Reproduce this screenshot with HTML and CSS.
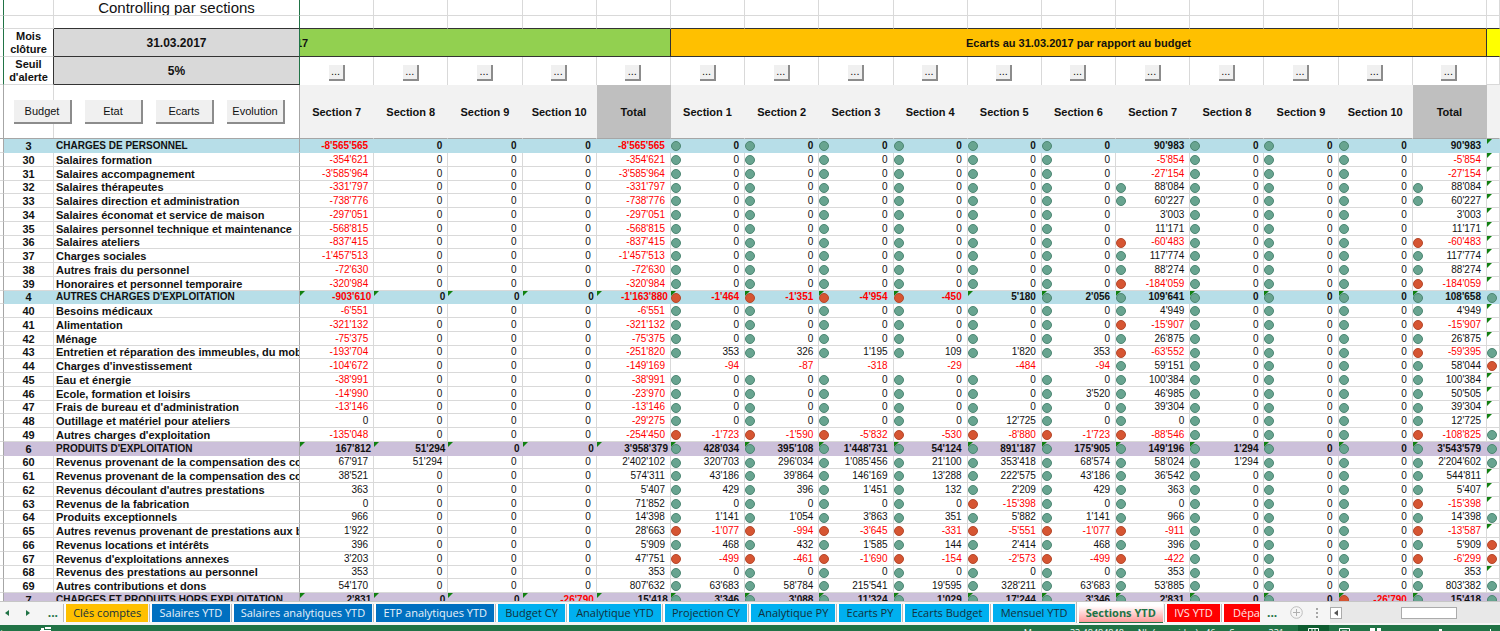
FILE: index.html
```
<!DOCTYPE html>
<html lang="fr">
<head>
  <meta charset="UTF-8" />
  <meta name="viewport" content="width=device-width, initial-scale=1.0"/>
  <title>Controlling par sections</title>
  <link rel="stylesheet" href="styles.css">
</head>
<body>
  <main class="sheet">
    <table class="grid">
      <colgroup id="cols">
        <col class="col-edge">
        <col class="col-code">
        <col class="col-label">
      </colgroup>
      <thead id="head">
        <tr class="row-title" id="rowTitle">
          <td class="edge"></td>
          <td></td>
          <th class="title frozen">Controlling par sections</th>
        </tr>
        <tr class="row-gap" id="rowGap">
          <td class="edge"></td>
          <td></td>
          <td class="frozen"></td>
        </tr>
        <tr class="row-banner">
          <td class="edge"></td>
          <th class="param-name">Mois clôture</th>
          <td class="param frozen">31.03.2017</td>
          <th class="banner banner-green" colspan="5">17</th>
          <th class="banner banner-orange" colspan="11">Ecarts au 31.03.2017 par rapport au budget</th>
          <th class="banner banner-yellow"></th>
        </tr>
        <tr class="row-more" id="rowMore">
          <td class="edge"></td>
          <th class="param-name">Seuil d'alerte</th>
          <td class="param frozen">5%</td>
        </tr>
        <tr class="row-head" id="rowHead">
          <td class="edge"></td>
          <td class="actions" colspan="2">
            <div class="action-list">
              <button type="button" class="btn">Budget</button>
              <button type="button" class="btn">Etat</button>
              <button type="button" class="btn">Ecarts</button>
              <button type="button" class="btn">Evolution</button>
            </div>
          </td>
        </tr>
      </thead>
      <tbody id="rows"></tbody>
    </table>
  </main>

  <nav class="tabs">
    <div class="tab-nav">
      <button type="button" class="nav-btn" aria-label="Feuille précédente"><svg width="4" height="6" viewBox="0 0 4 6"><path d="M4 0v6L0 3z"/></svg></button>
      <button type="button" class="nav-btn" aria-label="Feuille suivante"><svg width="4" height="6" viewBox="0 0 4 6"><path d="M0 0v6l4-3z"/></svg></button>
      <button type="button" class="nav-btn nav-dots">...</button>
    </div>
    <div class="tab-list">
      <a href="#" class="tab gold">Clés comptes</a>
      <a href="#" class="tab blue">Salaires YTD</a>
      <a href="#" class="tab blue">Salaires analytiques YTD</a>
      <a href="#" class="tab blue">ETP analytiques YTD</a>
      <a href="#" class="tab cyan">Budget CY</a>
      <a href="#" class="tab cyan">Analytique YTD</a>
      <a href="#" class="tab cyan">Projection CY</a>
      <a href="#" class="tab cyan">Analytique PY</a>
      <a href="#" class="tab cyan">Ecarts PY</a>
      <a href="#" class="tab cyan">Ecarts Budget</a>
      <a href="#" class="tab cyan">Mensuel YTD</a>
      <a href="#" class="tab active">Sections YTD</a>
      <a href="#" class="tab red">IVS YTD</a>
      <a href="#" class="tab red cut">Dépa</a>
    </div>
    <div class="tab-end">
      <button type="button" class="nav-btn nav-dots">...</button>
      <button type="button" class="nav-btn" aria-label="Nouvelle feuille">
        <svg width="13" height="13" viewBox="0 0 13 13"><circle cx="6.5" cy="6.5" r="5.8" fill="none" stroke="#bdbdbd"/><path d="M6 3h1v3h3v1H7v3H6V7H3V6h3z" fill="#b0b0b0"/></svg>
      </button>
      <svg class="grip" width="2" height="10" viewBox="0 0 2 10"><path d="M0 0h2v2H0zM0 4h2v2H0zM0 8h2v2H0z" fill="#a6a6a6"/></svg>
    </div>
    <div class="scroll">
      <button type="button" class="scroll-btn" aria-label="Défiler à gauche"><svg width="4" height="6" viewBox="0 0 4 6"><path d="M4 0v6L0 3z" fill="#555"/></svg></button>
      <div class="thumb"></div>
    </div>
  </nav>

  <footer class="status">
    <span class="ready">Prêt</span>
    <svg class="macro" width="11" height="8" viewBox="0 0 11 8"><path d="M1 1h3v2H1zM5 0h6v2H5zM0 3h11v5H0z" fill="#fff"/></svg>
    <div class="stats">
      <span>Moyenne : 33.48484848</span>
      <span>Nb (non vides) : 46</span>
      <span>Somme : 331</span>
    </div>
    <div class="views">
      <span class="view on"><svg width="11" height="9" viewBox="0 0 11 9"><path d="M.5.5h10v8H.5zM4 0v9M7 0v9M0 4h11" fill="none" stroke="#fff"/></svg></span>
      <span class="view"><svg width="11" height="9" viewBox="0 0 11 9"><path d="M.5.5h10v8H.5zM3 3h5v5H3z" fill="none" stroke="#fff"/></svg></span>
      <span class="view"><svg width="11" height="9" viewBox="0 0 11 9"><path d="M0 0h5v4H0zM7 0h4v4H7zM0 5h11v4H0z" fill="#fff"/></svg></span>
    </div>
    <div class="zoom">
      <span class="knob"></span>
      <span class="plus"></span>
    </div>
  </footer>

  <script>
    // [code, label, budget (S7..S10, total), ecarts (S1..S10, total), next block]
    // a trailing * means that no status icon is shown for the value
    const ROWS = [
      ["3", "CHARGES DE PERSONNEL", "-8'565'565 0 0 0 -8'565'565", "0 0 0 0 0 0 90'983* 0 0 0 90'983*", "t"],
      ["30", "Salaires formation", "-354'621 0 0 0 -354'621", "0 0 0 0 0 0 -5'854* 0 0 0 -5'854*", "t"],
      ["31", "Salaires accompagnement", "-3'585'964 0 0 0 -3'585'964", "0 0 0 0 0 0 -27'154* 0 0 0 -27'154*", "t"],
      ["32", "Salaires thérapeutes", "-331'797 0 0 0 -331'797", "0 0 0 0 0 0 88'084 0 0 0 88'084", "t"],
      ["33", "Salaires direction et administration", "-738'776 0 0 0 -738'776", "0 0 0 0 0 0 60'227 0 0 0 60'227", "t"],
      ["34", "Salaires économat et service de maison", "-297'051 0 0 0 -297'051", "0 0 0 0 0 0 3'003* 0 0 0 3'003*", "t"],
      ["35", "Salaires personnel technique et maintenance", "-568'815 0 0 0 -568'815", "0 0 0 0 0 0 11'171* 0 0 0 11'171*", "t"],
      ["36", "Salaires ateliers", "-837'415 0 0 0 -837'415", "0 0 0 0 0 0 -60'483 0 0 0 -60'483", "t"],
      ["37", "Charges sociales", "-1'457'513 0 0 0 -1'457'513", "0 0 0 0 0 0 117'774 0 0 0 117'774", "t"],
      ["38", "Autres frais du personnel", "-72'630 0 0 0 -72'630", "0 0 0 0 0 0 88'274 0 0 0 88'274", "t"],
      ["39", "Honoraires et personnel temporaire", "-320'984 0 0 0 -320'984", "0 0 0 0 0 0 -184'059 0 0 0 -184'059", "t"],
      ["4", "AUTRES CHARGES D'EXPLOITATION", "-903'610 0 0 0 -1'163'880", "-1'464 -1'351 -4'954 -450 5'180* 2'056 109'641 0 0 0 108'658", "g"],
      ["40", "Besoins médicaux", "-6'551 0 0 0 -6'551", "0 0 0 0 0 0 4'949 0 0 0 4'949", "t"],
      ["41", "Alimentation", "-321'132 0 0 0 -321'132", "0 0 0 0 0 0 -15'907 0 0 0 -15'907", "t"],
      ["42", "Ménage", "-75'375 0 0 0 -75'375", "0 0 0 0 0 0 26'875 0 0 0 26'875", "t"],
      ["43", "Entretien et réparation des immeubles, du mobilier", "-193'704 0 0 0 -251'820", "353 326 1'195 109 1'820 353 -63'552 0 0 0 -59'395", "g"],
      ["44", "Charges d'investissement", "-104'672 0 0 0 -149'169", "-94* -87* -318* -29* -484* -94* 59'151 0 0 0 58'044", "r"],
      ["45", "Eau et énergie", "-38'991 0 0 0 -38'991", "0 0 0 0 0 0 100'384 0 0 0 100'384", "t"],
      ["46", "Ecole, formation et loisirs", "-14'990 0 0 0 -23'970", "0 0 0 0 0 3'520 46'985 0 0 0 50'505", "t"],
      ["47", "Frais de bureau et d'administration", "-13'146 0 0 0 -13'146", "0 0 0 0 0 0 39'304 0 0 0 39'304", "t"],
      ["48", "Outillage et matériel pour ateliers", "0 0 0 0 -29'275", "0 0 0 0 12'725 0 0 0 0 0 12'725", "t"],
      ["49", "Autres charges d'exploitation", "-135'048 0 0 0 -254'450", "-1'723 -1'590 -5'832 -530 -8'880 -1'723 -88'546 0 0 0 -108'825", "g"],
      ["6", "PRODUITS D'EXPLOITATION", "167'812 51'294 0 0 3'958'379", "428'034 395'108 1'448'731 54'124 891'187 175'905 149'196 1'294 0 0 3'543'579", "g"],
      ["60", "Revenus provenant de la compensation des coûts", "67'917 51'294 0 0 2'402'102", "320'703 296'034 1'085'456 21'100 353'418 68'574 58'024 1'294 0 0 2'204'602", "g"],
      ["61", "Revenus provenant de la compensation des coûts", "38'521 0 0 0 574'311", "43'186 39'864 146'169 13'288 222'575 43'186 36'542 0 0 0 544'811", "t"],
      ["62", "Revenus découlant d'autres prestations", "363 0 0 0 5'407", "429 396 1'451 132 2'209 429 363 0 0 0 5'407", "t"],
      ["63", "Revenus de la fabrication", "0 0 0 0 71'852", "0 0 0 0 -15'398 0 0 0 0 0 -15'398", "t"],
      ["64", "Produits exceptionnels", "966 0 0 0 14'398", "1'141 1'054 3'863 351 5'882 1'141 966 0 0 0 14'398", "g"],
      ["65", "Autres revenus provenant de prestations aux bénéf.", "1'922 0 0 0 28'663", "-1'077 -994 -3'645 -331 -5'551 -1'077 -911 0 0 0 -13'587", "t"],
      ["66", "Revenus locations et intérêts", "396 0 0 0 5'909", "468 432 1'585 144 2'414 468 396 0 0 0 5'909", "r"],
      ["67", "Revenus d'exploitations annexes", "3'203 0 0 0 47'751", "-499 -461 -1'690 -154 -2'573 -499 -422 0 0 0 -6'299", "r"],
      ["68", "Revenus des prestations au personnel", "353 0 0 0 353", "0 0 0 0 0 0 353 0 0 0 353", "t"],
      ["69", "Autres contributions et dons", "54'170 0 0 0 807'632", "63'683 58'784 215'541 19'595 328'211 63'683 53'885 0 0 0 803'382", "g"],
      ["7", "CHARGES ET PRODUITS HORS EXPLOITATION", "2'831 0 0 -26'790 15'418", "3'346 3'088 11'324 1'029 17'244 3'346 2'831 0 0 -26'790 15'418", "g"]
    ];

    const GROUPS = { 3: 'group cost', 4: 'group cost marked', 6: 'group income marked', 7: 'group income marked' };
    const SECTIONS = [7, 8, 9, 10, 0, 1, 2, 3, 4, 5, 6, 7, 8, 9, 10, 0];

    function add(parent, tag, className, text) {
      const el = document.createElement(tag);
      if (className) el.className = className;
      if (text) el.textContent = text;
      parent.appendChild(el);
      return el;
    }

    const byId = id => document.getElementById(id);

    // Header cells
    SECTIONS.forEach(n => {
      add(byId('cols'), 'col');
      add(byId('rowTitle'), 'td');
      add(byId('rowGap'), 'td');
      add(add(byId('rowMore'), 'td', 'more-cell'), 'button', 'more', '...').type = 'button';
      add(byId('rowHead'), 'th', n ? 'section' : 'section total', n ? 'Section ' + n : 'Total');
    });
    add(byId('cols'), 'col', 'col-next');
    ['rowTitle', 'rowGap', 'rowMore'].forEach(id => add(byId(id), 'td'));
    add(byId('rowHead'), 'th', 'section');

    function addIcon(cell, value) {
      add(cell, 'span', value.startsWith('-') ? 'dot bad' : 'dot good');
    }

    // Account rows
    ROWS.forEach(([code, label, budget, ecarts, next]) => {
      const tr = add(byId('rows'), 'tr', GROUPS[code]);
      add(tr, 'td', 'edge');
      add(tr, 'td', 'code', code);
      add(tr, 'th', 'label frozen', label);

      budget.split(' ').forEach(v => {
        add(tr, 'td', v.startsWith('-') ? 'num budget neg' : 'num budget', v);
      });

      ecarts.split(' ').forEach(v => {
        const cell = add(tr, 'td', v.startsWith('-') ? 'num neg' : 'num', v.replace('*', ''));
        if (!v.endsWith('*')) addIcon(cell, v);
      });

      const last = add(tr, 'td', next === 't' ? 'num flag' : 'num plain');
      if (next !== 't') addIcon(last, next === 'r' ? '-' : '');
    });
  </script>
</body>
</html>
```
FILE: styles.css
```
:root {
  --line: #d9d9d9;
  --freeze: #a6a6a6;
  --excel: #217346;
}

* {
  box-sizing: border-box;
}

body {
  margin: 0;
  height: 100vh;
  display: flex;
  flex-direction: column;
  overflow: hidden;
  background: #fff;
  color: #111;
  font-family: "Liberation Sans", Arial, sans-serif;
  font-size: 11px;
}

button {
  font-family: inherit;
  color: inherit;
  padding: 0;
}

.sheet {
  flex: 1;
  min-height: 0;
  overflow: hidden;
}

/* Grid */

.grid {
  width: 100%;
  table-layout: fixed;
  border-collapse: separate;
  border-spacing: 0;
}

.col-edge { width: 4px; }
.col-code { width: 50px; }
.col-label { width: 246px; }
.col-next { width: 13px; }

.grid td,
.grid th {
  padding: 0;
  border-right: 1px solid var(--line);
  border-bottom: 1px solid var(--line);
  white-space: nowrap;
  overflow: hidden;
}

.grid .edge {
  border-right-color: var(--freeze);
}

.grid .frozen {
  border-right-color: var(--freeze);
}

.row-title { height: 16px; }
.row-gap { height: 13px; }
.row-banner { height: 28px; }
.row-more { height: 28px; }
.row-head { height: 54px; }

.grid .title {
  font-size: 15px;
  font-weight: normal;
  line-height: 15px;
}

.grid .param-name {
  font-size: 11px;
  line-height: 13px;
  white-space: normal;
  border-right-color: #333;
}

.grid .param {
  background: #d9d9d9;
  border-bottom-color: #333;
  font-size: 12px;
  font-weight: bold;
  text-align: center;
}

.row-gap td:nth-child(n+3) {
  border-bottom-color: #333;
}

/* edge of the current selection */
.grid thead tr:not(.row-head) .edge,
.grid thead tr:not(.row-head) .frozen {
  border-right-color: var(--excel);
}

.grid .banner {
  border-right-color: #333;
  border-bottom-color: #333;
  font-size: 11px;
}

.grid .banner-green {
  background: #92d050;
  text-align: left;
  text-indent: -4px;
}

.banner-orange {
  background: #ffc000;
}

.grid .banner-yellow {
  background: #ff0;
  border-right-color: #ff0;
}

.grid .more-cell {
  padding-top: 3px;
  border-bottom: 0;
  vertical-align: middle;
}

.more {
  display: block;
  width: 16px;
  height: 16px;
  margin: 0 auto;
  background: #f0f0f0;
  border: solid #8c8c8c;
  border-width: 0 2px 2px 0;
  font-size: 11px;
  line-height: 13px;
}

.row-head th,
.row-head td {
  border-bottom-color: var(--freeze);
}

.grid .section {
  background: #f2f2f2;
  border-right-color: #f2f2f2;
  font-size: 11px;
}

.grid .section.total {
  background: #bfbfbf;
  border-right-color: #bfbfbf;
}

.grid .row-head > * {
  border-bottom-color: var(--freeze);
}

.grid .actions {
  border-right-color: var(--freeze);
  background: linear-gradient(var(--line), var(--line)) 49px 0 / 1px 100% no-repeat;
}

.action-list {
  display: flex;
  gap: 13px;
  padding-left: 10px;
}

.btn {
  width: 58px;
  height: 24px;
  background: #f0f0f0;
  border: solid #8c8c8c;
  border-width: 0 2px 2px 0;
  font-size: 11px;
}

/* Account rows */

/* rows alternate between 14 and 13 pixels at this zoom level */
#rows tr { height: 14px; }
#rows tr:nth-child(4n) { height: 13px; }

#rows td,
#rows th {
  line-height: 12px;
}

#rows .code {
  font-weight: bold;
  text-align: center;
}

#rows .label {
  padding-left: 2px;
  text-align: left;
}

#rows .group .label {
  font-size: 10px;
}

#rows .num {
  position: relative;
  padding-right: 5px;
  font-size: 10px;
  text-align: right;
}

#rows .neg {
  color: #f00;
}

.group .num {
  font-weight: bold;
}

#rows .marked .budget {
  padding-right: 2px;
}

.cost td:nth-child(n+2), .cost th {
  background: #b7dee8;
  border-color: #b7dee8 !important;
}

.income td:nth-child(n+2), .income th {
  background: #ccc0da;
  border-color: #ccc0da !important;
}

#rows .group .frozen {
  border-right-color: var(--freeze) !important;
}

.dot {
  position: absolute;
  left: 0;
  top: 2px;
  width: 10px;
  height: 10px;
  border-radius: 50%;
  border: 1px solid;
}

.dot.good {
  background: #68a490;
  border-color: #4c8672;
}

.dot.bad {
  background: #d65532;
  border-color: #b5472a;
}

/* Formula warning in the corner of a cell */
.flag::before,
.marked .num:not(.plain)::before {
  content: "";
  position: absolute;
  left: 0;
  top: 0;
  border-top: 5px solid #108010;
  border-right: 5px solid transparent;
}

/* Sheet tabs */

.tabs {
  flex: none;
  display: flex;
  height: 24px;
  padding-bottom: 2px;
  background: #f5f5f5;
  border-top: 1px solid #c6c6c6;
  font-family: "Open Sans", "Noto Sans", sans-serif;
  font-size: 11px;
}

.tab-nav {
  display: flex;
  align-items: center;
  justify-content: space-between;
  width: 64px;
  padding: 0 6px 0 5px;
  flex: none;
}

.nav-btn {
  display: flex;
  background: none;
  border: 0;
  fill: var(--excel);
}

.nav-dots {
  color: var(--excel);
  font-size: 12px;
  font-weight: bold;
}

.tab-list {
  flex: 1;
  min-width: 0;
  display: flex;
  gap: 4px;
  padding-left: 2px;
}

.tab {
  flex: 1 1 auto;
  display: flex;
  align-items: center;
  justify-content: center;
  margin: 2px 0 1px;
  padding-bottom: 2px;
  color: #12303c;
  text-decoration: none;
  white-space: nowrap;
  box-shadow: -2px 0 #fff, -3px 0 #bbb;
}

.gold { background: #ffc000; }
.blue { background: #0070c0; color: #e8f2fa; }
.cyan { background: #00b0f0; }
.red { background: #f00; color: #ffe4e4; }

.tab.active {
  margin: 0;
  padding-bottom: 0;
  background: linear-gradient(#fff 20%, #ff9a9a);
  border-bottom: 1px solid var(--excel);
  color: var(--excel);
  font-weight: bold;
}

.tab.cut {
  flex: none;
  width: 36px;
  justify-content: flex-end;
}

.tab-end {
  flex: none;
  display: flex;
  align-items: center;
  justify-content: space-between;
  width: 70px;
  padding: 0 12px 0 7px;
}

.scroll {
  flex: none;
  display: flex;
  align-items: center;
  width: 170px;
  background: #e8e8e8;
}

.scroll-btn {
  display: flex;
  align-items: center;
  justify-content: center;
  width: 12px;
  height: 12px;
  background: #fff;
  border: 1px solid #ababab;
}

.thumb {
  width: 56px;
  height: 12px;
  margin-left: 59px;
  background: #fff;
  border: 1px solid #ababab;
}

/* Status bar */

.status {
  flex: none;
  display: flex;
  height: 6px;
  overflow: hidden;
  background: var(--excel);
  color: #fff;
  font-family: "Open Sans", "Noto Sans", sans-serif;
  font-size: 9px;
  line-height: 15px;
}

.ready {
  width: 40px;
  text-indent: -14px;
  overflow: hidden;
}

.macro {
  margin-top: 2px;
}

.stats {
  flex: 1;
  display: flex;
  justify-content: flex-end;
  gap: 14px;
  padding-right: 14px;
}

.views {
  display: flex;
}

.view {
  width: 31px;
  padding: 3px 10px 0;
  line-height: 0;
}

.view.on {
  background: #0e5c30;
}

.zoom {
  display: flex;
  justify-content: space-between;
  width: 109px;
  padding: 4px 9px 0 48px;
}

.knob {
  width: 3px;
  background: #fff;
}

.plus {
  width: 1px;
  background: #fff;
}
```
